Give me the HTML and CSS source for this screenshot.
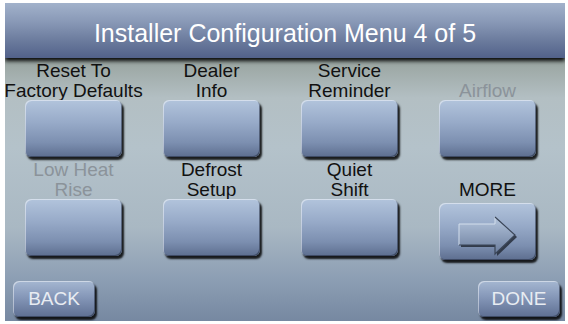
FILE: index.html
```html
<!DOCTYPE html>
<html lang="en">
<head>
  <meta charset="UTF-8" />
  <title>Installer Configuration</title>
  <link rel="stylesheet" href="styles.css">
</head>
<body>
  <div class="screen">
    <div class="header">Installer Configuration Menu 4 of 5</div>

    <div class="content">
      <div class="menu">
        <div class="item">
          <div class="label">Reset To<br>Factory Defaults</div>
          <button class="key"></button>
        </div>
        <div class="item">
          <div class="label">Dealer<br>Info</div>
          <button class="key"></button>
        </div>
        <div class="item">
          <div class="label">Service<br>Reminder</div>
          <button class="key"></button>
        </div>
        <div class="item">
          <div class="label disabled">Airflow</div>
          <button class="key"></button>
        </div>

        <div class="item">
          <div class="label disabled">Low Heat<br>Rise</div>
          <button class="key"></button>
        </div>
        <div class="item">
          <div class="label">Defrost<br>Setup</div>
          <button class="key"></button>
        </div>
        <div class="item">
          <div class="label">Quiet<br>Shift</div>
          <button class="key"></button>
        </div>
        <div class="item">
          <div class="label more">MORE</div>
          <button class="key">
            <svg width="96" height="57" viewBox="0 0 96 57">
              <defs>
                <linearGradient id="arrowFill" x1="0" y1="0" x2="0" y2="1">
                  <stop offset="0" stop-color="#b4c5dc"/>
                  <stop offset="1" stop-color="#6a7c9c"/>
                </linearGradient>
              </defs>
              <path d="M22 23 H58 V16 L78 34 L58 53 V44 H22 Z" fill="#262d3a" opacity="0.85"/>
              <path d="M20 21 H56 V14 L76 32 L56 51 V42 H20 Z" fill="url(#arrowFill)"/>
              <path d="M20 42 V21 H56 V14" fill="none" stroke="#d3deec" stroke-width="1"/>
              <path d="M56 14 L76 32 L56 51 V42 H20" fill="none" stroke="#3b4658" stroke-width="1.2"/>
            </svg>
          </button>
        </div>
      </div>

      <div class="footer">
        <button class="nav">BACK</button>
        <button class="nav">DONE</button>
      </div>
    </div>
  </div>
</body>
</html>
```

FILE: styles.css
```css
body {
  margin: 0;
  background: #ffffff;
  font-family: "Liberation Sans", Arial, sans-serif;
}
.screen {
  margin: 3px 3px 0 5px;
  width: 560px;
  height: 318px;
  display: flex;
  flex-direction: column;
  overflow: hidden;
}
.header {
  position: relative;
  z-index: 1;
  height: 55px;
  padding-top: 6px;
  box-sizing: border-box;
  line-height: 49px;
  text-align: center;
  color: #ffffff;
  font-size: 25px;
  background: linear-gradient(#a2b2cb 0%, #8898b6 35%, #6a7a9c 70%, #52618a 100%);
  box-shadow: 0 3px 4px rgba(0, 0, 0, 0.95);
}
.content {
  flex: 1;
  background: linear-gradient(#98a39e 0px, #b3bfc3 40px, #b4c2ca 90px, #a9b8c3 170px, #8d9fb4 220px, #7688a1 263px);
}
.menu {
  display: grid;
  grid-template-columns: repeat(4, 97px);
  column-gap: 41px;
  row-gap: 3px;
  padding: 3px 0 0 20px;
}
.item {
  display: flex;
  flex-direction: column;
}
.label {
  height: 40px;
  margin: 0 -30px -1px;
  display: flex;
  flex-direction: column;
  justify-content: flex-end;
  text-align: center;
  font-size: 19px;
  line-height: 20px;
  color: #111111;
  white-space: nowrap;
}
.label.disabled {
  color: #8b939a;
}
.label.more {
  padding-bottom: 4px;
}
.key {
  width: 97px;
  height: 57px;
  padding: 0;
  border: none;
  border-radius: 6px;
  background: linear-gradient(#b2c4dc 0%, #97aac8 40%, #7c8fb0 75%, #5d6e8f 100%);
  box-shadow: inset 1px 1px 0 rgba(255, 255, 255, 0.45), inset -1px -1px 0 rgba(30, 38, 55, 0.5), 2px 3px 2px rgba(0, 0, 0, 0.85);
}
.key svg {
  display: block;
}
.footer {
  display: flex;
  justify-content: space-between;
  padding: 21px 5px 0 8px;
}
.nav {
  width: 82px;
  height: 36px;
  padding: 0;
  border: none;
  border-radius: 6px;
  font-family: "Liberation Sans", Arial, sans-serif;
  font-size: 19px;
  color: #e8ecf2;
  background: linear-gradient(#a5b7d1 0%, #8597b8 45%, #5e6f92 100%);
  box-shadow: inset 1px 1px 0 rgba(255, 255, 255, 0.45), inset -1px -1px 0 rgba(30, 38, 55, 0.5), 2px 3px 2px rgba(0, 0, 0, 0.85);
}
```
